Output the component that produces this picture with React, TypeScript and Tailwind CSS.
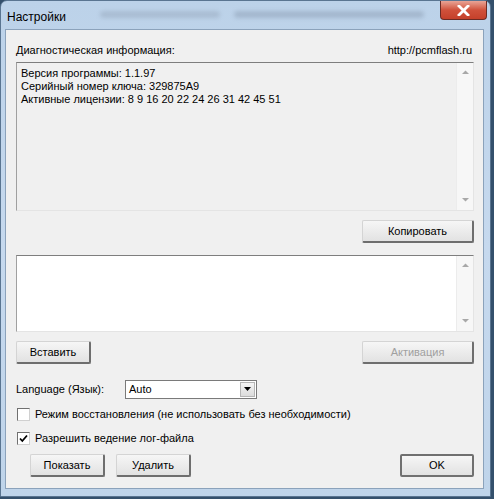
import React from "react";

const font = { fontFamily: '"Liberation Sans", Arial, sans-serif' };

function Btn({ children, w, disabled, def }: { children: React.ReactNode; w: string; disabled?: boolean; def?: boolean }) {
  return (
    <div
      className={`${w} h-[23px] flex items-center justify-center text-[11px] rounded-[2px] bg-gradient-to-b from-[#f6f6f6] to-[#e2e2e2] ${
        def
          ? "border-2 border-[#707070]"
          : "border border-t-[#d4d4d4] border-l-[#d4d4d4] border-r-2 border-b-2 border-r-[#6e6e6e] border-b-[#6e6e6e]"
      } ${disabled ? "text-[#a0a0a0]" : "text-black"}`}
    >
      {children}
    </div>
  );
}

function ScrollBar() {
  return (
    <div className="w-[17px] h-full flex flex-col justify-between items-center bg-[#f7f7f7] border-l border-[#ececec]">
      <svg width="9" height="15" viewBox="0 0 9 15" className="mt-[3px]">
        <path d="M1 8 L4.5 4.5 L8 8 Z" fill="#a8a8a8" />
      </svg>
      <svg width="9" height="15" viewBox="0 0 9 15" className="mb-[3px]">
        <path d="M1 6 L4.5 9.5 L8 6 Z" fill="#a8a8a8" />
      </svg>
    </div>
  );
}

function CheckBox({ checked }: { checked?: boolean }) {
  return (
    <div className="w-[13px] h-[13px] bg-white border border-t-[#707070] border-l-[#707070] border-r-[#d0d0d0] border-b-[#d0d0d0] flex items-center justify-center">
      {checked && (
        <svg width="9" height="9" viewBox="0 0 9 9">
          <path d="M1 4.5 L3.3 7 L8 1.5" stroke="#000" strokeWidth="1.8" fill="none" />
        </svg>
      )}
    </div>
  );
}

export default function App() {
  return (
    <div className="w-[494px] h-[499px] bg-[#34506c] overflow-hidden" style={font}>
      <div className="w-[491px] h-[497px] rounded-t-[7px] border border-[#5a7591] bg-gradient-to-b from-[#bcd2e9] via-[#c6d9ee] to-[#bfd4ea] flex flex-col">
        {/* title bar */}
        <div className="h-[28px] flex items-start relative">
          <div className="pl-[6px] pt-[7px] text-[12px] text-black">Настройки</div>
          <div className="flex-1 flex gap-[14px] pt-[10px] pl-[34px]">
            <div className="w-[120px] h-[7px] bg-[#8c9cb0] opacity-40 blur-[2px] rounded" />
            <div className="w-[190px] h-[7px] bg-[#7e8ea4] opacity-40 blur-[2px] rounded" />
          </div>
          <div className="mr-[3px] w-[47px] h-[19px] rounded-b-[4px] border border-t-0 border-[#6b2b24] bg-gradient-to-b from-[#e8a496] via-[#d0513b] to-[#c5402a] flex items-center justify-center">
            <svg width="13" height="11" viewBox="0 0 13 11">
              <path d="M2 1 L11 10 M11 1 L2 10" stroke="#fff" strokeWidth="2.8" strokeLinecap="square" />
            </svg>
          </div>
        </div>
        {/* client area */}
        <div className="ml-[4px] w-[479px] h-[460px] bg-[#f0f0f0] border border-[#8ba2bb] text-[11px] text-black flex flex-col px-[10px]">
          <div className="mt-[13px] h-[14px] flex items-center justify-between">
            <span>Диагностическая информация:</span>
            <span className="mr-[1px]">http://pcmflash.ru</span>
          </div>
          <div className="mt-[5px] w-[458px] h-[149px] flex border border-t-[#7e7e7e] border-l-[#a0a0a0] border-r-[#e4e4e4] border-b-[#e4e4e4] bg-[#f0f0f0]">
            <div className="flex-1 pl-[4px] pt-[4px] leading-[13px]">
              <div>Версия программы: 1.1.97</div>
              <div>Серийный номер ключа: 329875A9</div>
              <div>Активные лицензии: 8 9 16 20 22 24 26 31 42 45 51</div>
            </div>
            <ScrollBar />
          </div>
          <div className="mt-[9px] flex justify-end w-[458px]">
            <Btn w="w-[112px]">Копировать</Btn>
          </div>
          <div className="mt-[12px] w-[458px] h-[77px] flex border border-t-[#7e7e7e] border-l-[#a0a0a0] border-r-[#e4e4e4] border-b-[#e4e4e4] bg-white">
            <div className="flex-1" />
            <ScrollBar />
          </div>
          <div className="mt-[9px] w-[458px] flex justify-between">
            <Btn w="w-[75px]">Вставить</Btn>
            <Btn w="w-[112px]" disabled>
              Активация
            </Btn>
          </div>
          <div className="mt-[15px] h-[20px] flex items-center">
            <span className="w-[109px]">Language (Язык):</span>
            <div className="w-[132px] h-[19px] bg-white border border-[#7a7a7a] flex items-center">
              <span className="flex-1 pl-[3px]">Auto</span>
              <div className="w-[15px] h-[15px] mr-[1px] bg-gradient-to-b from-[#f4f4f4] to-[#dcdcdc] border border-[#b5b5b5] flex items-center justify-center">
                <svg width="7" height="4" viewBox="0 0 7 4">
                  <path d="M0 0 L7 0 L3.5 4 Z" fill="#000" />
                </svg>
              </div>
            </div>
          </div>
          <div className="mt-[8px] h-[14px] flex items-center gap-[5px] pl-[1px]">
            <CheckBox />
            <span>Режим восстановления (не использовать без необходимости)</span>
          </div>
          <div className="mt-[10px] h-[14px] flex items-center gap-[5px] pl-[1px]">
            <CheckBox checked />
            <span>Разрешить ведение лог-файла</span>
          </div>
          <div className="mt-[9px] w-[458px] flex items-center">
            <div className="ml-[14px]">
              <Btn w="w-[75px]">Показать</Btn>
            </div>
            <div className="ml-[11px]">
              <Btn w="w-[75px]">Удалить</Btn>
            </div>
            <div className="ml-auto">
              <Btn w="w-[74px]" def>
                OK
              </Btn>
            </div>
          </div>
        </div>
      </div>
    </div>
  );
}
